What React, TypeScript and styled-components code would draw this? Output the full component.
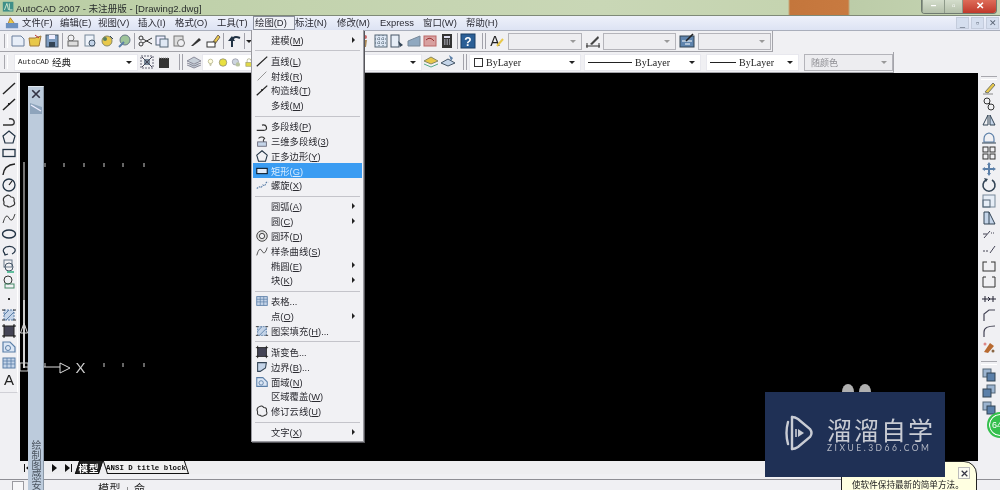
import React from "react";
import styled, { createGlobalStyle } from "styled-components";

const CJK = `"Liberation Sans", "Noto Sans CJK SC", sans-serif`;

const Global = createGlobalStyle`
  html, body { margin: 0; padding: 0; background: #f0f0f3; }
  body { font-family: ${CJK}; overflow: hidden; }
`;

const Page = styled.div`
  position: relative;
  width: 1000px;
  height: 490px;
  overflow: hidden;
  display: flex;
  flex-direction: column;
  background: #f0f0f3;
  filter: blur(0.35px);
`;

const TitleBar = styled.div`
  height: 15px;
  flex: none;
  display: flex;
  align-items: center;
  padding-left: 2px;
  gap: 1px;
  background: linear-gradient(90deg, #b9cda4 0%, #c3d3ae 30%, #c9d7b6 60%, #c5d4b0 78.8%, #c4763c 79%, #c87a40 84.8%, #bccca8 85%, #c6d5b4 100%);
  border-bottom: 1px solid #7f8a78;
`;

const TitleText = styled.span`
  font-size: 9.6px;
  color: #2a2f2e;
  white-space: nowrap;
`;

const CapsuleWrap = styled.div`
  margin-left: auto;
  margin-right: 3px;
  margin-top: -3px;
  width: 74px;
  height: 14px;
  display: flex;
  border: 1px solid #6f7a70;
  border-top: 0;
  border-radius: 0 0 4px 4px;
  overflow: hidden;
`;

const Capsule = styled.div<{ $w: number; $red?: boolean }>`
  width: ${(p) => p.$w}px;
  display: flex;
  align-items: center;
  justify-content: center;
  color: #fff;
  font-size: 10px;
  font-weight: bold;
  background: ${(p) => (p.$red ? "linear-gradient(#e0705c, #c0392b)" : "linear-gradient(#d6dfce, #b4c0aa)")};
  border-left: 1px solid #8e9a8a;
`;

const MenuBar = styled.div`
  height: 14px;
  flex: none;
  display: flex;
  align-items: center;
  background: linear-gradient(#eef1fa, #dde3f3);
  border-bottom: 1px solid #a9aebb;
  padding-left: 5px;
`;

const MenuLogo = styled.div`
  width: 17px;
  display: flex;
`;

const MenuEntry = styled.div<{ $w: number; $open?: boolean }>`
  width: ${(p) => p.$w}px;
  flex: none;
  height: 14px;
  line-height: 14px;
  font-size: 9.4px;
  color: #2a2a33;
  white-space: nowrap;
  box-sizing: border-box;
  ${(p) => (p.$open ? "border: 1px solid #8a8f9c; background: #eef0f6; line-height: 12px; padding-left: 1px;" : "")}
`;

const WinButtons = styled.div`
  margin-left: auto;
  display: flex;
  gap: 2px;
  padding-right: 1px;
`;

const WinButton = styled.div`
  width: 13px;
  height: 12px;
  background: #d5deee;
  border: 1px solid #c4ccdc;
  box-sizing: border-box;
  color: #5a6474;
  font-size: 9px;
  line-height: 10px;
  text-align: center;
`;

const ToolRow = styled.div`
  height: 21px;
  flex: none;
  display: flex;
  background: #f0f0f3;
`;

const Band = styled.div<{ $w: number; $pad: number }>`
  width: ${(p) => p.$w}px;
  box-sizing: border-box;
  padding-left: ${(p) => p.$pad}px;
  height: 21px;
  position: relative;
  display: flex;
  align-items: center;
  border-right: 1px solid #a4a4aa;
  border-bottom: 1px solid #a4a4aa;
`;

const Grip = styled.div`
  position: absolute;
  left: 4px;
  top: 3px;
  bottom: 3px;
  width: 2px;
  border-left: 1px solid #a8a8ae;
  border-right: 1px solid #fff;
`;

const Slot = styled.div<{ $w?: number }>`
  width: ${(p) => p.$w ?? 17}px;
  height: 16px;
  flex: none;
  display: flex;
  align-items: center;
  justify-content: center;
`;

const Sep = styled.div<{ $w: number; $double?: boolean }>`
  width: ${(p) => p.$w}px;
  height: 16px;
  flex: none;
  position: relative;
  &::after {
    content: "";
    position: absolute;
    left: 50%;
    top: 0;
    bottom: 0;
    width: ${(p) => (p.$double ? 2 : 0)}px;
    border-left: 1px solid #a2a2aa;
    border-right: ${(p) => (p.$double ? "1px solid #a2a2aa" : "0")};
  }
`;

const Drop = styled.div`
  width: 0;
  height: 0;
  flex: none;
  border-left: 3px solid transparent;
  border-right: 3px solid transparent;
  border-top: 3px solid #222;
`;

const Combo = styled.div<{ $w: number; $disabled?: boolean; $ml?: number }>`
  width: ${(p) => p.$w}px;
  margin-left: ${(p) => p.$ml ?? 0}px;
  height: 17px;
  flex: none;
  box-sizing: border-box;
  display: flex;
  align-items: center;
  gap: 3px;
  padding: 0 5px 0 3px;
  border: 1px solid ${(p) => (p.$disabled ? "#b4b4ba" : "#e8e8ee")};
  background: ${(p) => (p.$disabled ? "#ededf0" : "#fff")};
  color: ${(p) => (p.$disabled ? "#8d8d92" : "#222")};
  ${Drop} {
    margin-left: auto;
    ${(p) => (p.$disabled ? "border-top-color: #999;" : "")}
  }
`;

const MonoLabel = styled.span`
  font-family: "Liberation Mono", monospace;
  font-size: 7.4px;
  white-space: nowrap;
  color: #222;
`;

const CjkLabel = styled.span`
  font-size: 9.5px;
  white-space: nowrap;
  color: #222;
`;

const SerifLabel = styled.span`
  font-family: "Liberation Serif", serif;
  font-size: 10px;
  white-space: nowrap;
  color: #222;
`;

const Swatch = styled.span`
  width: 7px;
  height: 7px;
  flex: none;
  border: 1px solid #333;
  margin-left: 1px;
`;

const LineSample = styled.span<{ $w: number }>`
  width: ${(p) => p.$w}px;
  height: 1px;
  flex: none;
  background: #222;
`;

const ComboText = styled.span`
  font-size: 9px;
  margin-left: 3px;
`;

const Main = styled.div`
  flex: 1;
  min-height: 0;
  display: flex;
`;

const SideLeft = styled.div`
  width: 20px;
  flex: none;
  background: #f0f0f3;
`;

const LeftBand = styled.div`
  width: 18px;
  box-sizing: border-box;
  height: 320px;
  padding-top: 7px;
  display: flex;
  flex-direction: column;
  border-right: 1px solid #fff;
  border-bottom: 1px solid #d0d0d6;
`;

const Center = styled.div`
  flex: 1;
  min-width: 0;
  display: flex;
  flex-direction: column;
`;

const Canvas = styled.div`
  height: 388px;
  flex: none;
  background: #000;
  line-height: 0;
`;

const TabRow = styled.div`
  height: 13px;
  flex: none;
  display: flex;
  align-items: center;
  background: #eeeef0;
  padding-left: 1px;
`;

const Nav = styled.div<{ $w: number }>`
  width: ${(p) => p.$w}px;
  flex: none;
  display: flex;
  align-items: center;
  justify-content: center;
  gap: 1px;
`;

const TriRight = styled.i`
  display: block;
  width: 0;
  height: 0;
  border-top: 4px solid transparent;
  border-bottom: 4px solid transparent;
  border-left: 5px solid #111;
`;

const TriLeft = styled.i`
  display: block;
  width: 0;
  height: 0;
  border-top: 4px solid transparent;
  border-bottom: 4px solid transparent;
  border-right: 5px solid #111;
`;

const Bar = styled.i`
  display: block;
  width: 1px;
  height: 8px;
  background: #111;
`;

const Tab = styled.div<{ $active?: boolean; $w: number }>`
  position: relative;
  width: ${(p) => p.$w}px;
  height: 13px;
  flex: none;
  display: flex;
  align-items: center;
  justify-content: center;
  color: ${(p) => (p.$active ? "#fff" : "#111")};
  &::before {
    content: "";
    position: absolute;
    inset: 0 2px;
    transform: skewX(${(p) => (p.$active ? -18 : 18)}deg);
    background: ${(p) => (p.$active ? "#222" : "#f0f0f0")};
    border-left: 1px solid #111;
    border-right: 1px solid #111;
    border-bottom: 1px solid #111;
  }
  & > span {
    position: relative;
  }
`;

const ModelLabel = styled.span`
  font-size: 9.5px;
  font-weight: bold;
  letter-spacing: 1px;
`;

const SheetLabel = styled.span`
  font-family: "Liberation Mono", monospace;
  font-size: 7.4px;
  font-weight: bold;
`;

const SideRight = styled.div`
  width: 22px;
  flex: none;
  display: flex;
  flex-direction: column;
  align-items: center;
  padding-top: 3px;
  background: #f0f0f3;
`;

const RightGrip = styled.div<{ $mt: number }>`
  width: 16px;
  height: 2px;
  flex: none;
  margin-top: ${(p) => p.$mt}px;
  border-top: 1px solid #a8a8ae;
  border-bottom: 1px solid #fff;
`;

const VSlot = styled.div<{ $h?: number }>`
  height: ${(p) => p.$h ?? 16.2}px;
  width: 17px;
  flex: none;
  display: flex;
  align-items: center;
  justify-content: center;
`;

const Command = styled.div`
  height: 16px;
  flex: none;
  position: relative;
  overflow: hidden;
  background: #f0f0f3;
  padding-left: 98px;
  &::before {
    content: "";
    position: absolute;
    left: 0;
    right: 0;
    top: 5px;
    border-top: 1px solid #8e8e94;
  }
`;

const CommandGrip = styled.div`
  position: absolute;
  left: 12px;
  top: 7px;
  width: 12px;
  height: 12px;
  box-sizing: border-box;
  border: 1px solid #9a9aa0;
  border-bottom: 0;
  background: #f7f7f9;
`;

const CommandText = styled.div`
  margin-top: 8px;
  font-size: 11px;
  line-height: 14px;
  color: #222;
  letter-spacing: 0.5px;
  white-space: nowrap;
`;

const Palette = styled.div`
  position: absolute;
  left: 28px;
  top: 86px;
  width: 16px;
  height: 404px;
  box-sizing: border-box;
  background: #bccbdc;
  border-right: 1px solid #8d9aa8;
  display: flex;
  flex-direction: column;
  align-items: center;
  padding-top: 1px;
  border-top: 1px solid #dfe6ee;
`;

const PaletteLabel = styled.div`
  margin-top: auto;
  writing-mode: vertical-rl;
  font-size: 10px;
  line-height: 13px;
  color: #4c5560;
`;

const Menu = styled.div`
  position: absolute;
  left: 251px;
  top: 30px;
  width: 113px;
  height: 412px;
  box-sizing: border-box;
  padding: 2.5px 1px;
  background: #f1f1f4;
  border: 1px solid #9a9aa0;
  border-top: 0;
  box-shadow: 1px 1px 0 #55555a;
  z-index: 3;
`;

const Row = styled.div<{ $active?: boolean }>`
  height: 14.8px;
  display: flex;
  align-items: center;
  position: relative;
  font-size: 9.3px;
  color: ${(p) => (p.$active ? "#d6ebff" : "#2a2a30")};
  background: ${(p) => (p.$active ? "#3a9cf2" : "transparent")};
  white-space: nowrap;
`;

const RowIcon = styled.div`
  width: 18px;
  flex: none;
  display: flex;
  justify-content: center;
`;

const Underline = styled.span`
  text-decoration: underline;
`;

const Chevron = styled.i`
  position: absolute;
  right: 7px;
  top: 4px;
  width: 0;
  height: 0;
  border-top: 3px solid transparent;
  border-bottom: 3px solid transparent;
  border-left: 3px solid #222;
`;

const Divider = styled.div`
  height: 1px;
  margin: 3px 2px 2.2px 2px;
  background: #c4c4ca;
`;

const Watermark = styled.div`
  position: absolute;
  left: 765px;
  top: 392px;
  width: 180px;
  height: 85px;
  box-sizing: border-box;
  padding: 23px 0 0 19px;
  background: #1f3055;
  display: flex;
  gap: 13px;
  z-index: 5;
`;

const WmText = styled.div`
  display: flex;
  flex-direction: column;
  color: #c9ccd4;
`;

const WmTitle = styled.div`
  font-family: "Noto Sans CJK SC", sans-serif;
  font-size: 25px;
  line-height: 28px;
  letter-spacing: 2px;
  white-space: nowrap;
`;

const WmSub = styled.div`
  font-family: Lato, sans-serif;
  font-size: 8.5px;
  line-height: 10px;
  letter-spacing: 2.5px;
  white-space: nowrap;
  color: #b4b8c4;
`;

const Balloon = styled.div`
  position: absolute;
  left: 841px;
  top: 461px;
  width: 136px;
  height: 40px;
  box-sizing: border-box;
  background: #ffffe1;
  border: 1px solid #222;
  border-top-right-radius: 13px;
  padding: 17px 0 0 10px;
  font-size: 8.6px;
  line-height: 12px;
  color: #222;
  white-space: nowrap;
  z-index: 4;
`;

const BalloonClose = styled.div`
  position: absolute;
  right: 6px;
  top: 5px;
  width: 12px;
  height: 12px;
  box-sizing: border-box;
  border: 1px solid #bbb;
  background: #fbfbf2;
  display: flex;
  align-items: center;
  justify-content: center;
`;

const Badge = styled.div`
  position: absolute;
  left: 987px;
  top: 412px;
  width: 26px;
  height: 26px;
  box-sizing: border-box;
  border-radius: 50%;
  border: 2px solid #35c04d;
  background: #35c04d;
  box-shadow: inset 0 0 0 1px #fff;
  color: #fff;
  font-size: 9px;
  line-height: 22px;
  padding-left: 3px;
  z-index: 2;
`;

const L = (p: React.SVGProps<SVGPathElement>) => <path fill="none" stroke="#222" strokeWidth={1.2} {...p} />;
const B = "#5b7fa8";
const BF = "#c4d4e8";
const Y = "#e8c84a";

const icons: Record<string, React.ReactNode> = {
  line: <L d="M2 14L14 3" strokeWidth={1.4} />,
  ray: <L d="M3 13L13 3" stroke="#888" strokeWidth={1} />,
  xline: <><L d="M2 14L14 3" strokeWidth={1.5} /><rect x="7" y="7" width="2" height="2" fill="#222" /></>,
  pline: <L d="M2 13H10Q14 13 13 9Q12 6 8 7" strokeWidth={1.4} stroke="#333" />,
  pline3d: <><L d="M4 5Q8 2 11 5Q8 8 11 10" stroke="#333" /><rect x="3" y="9" width="10" height="5" fill={BF} stroke="#667" /></>,
  polygon: <L d="M8 2L14 7L12 14H4L2 7Z" strokeWidth={1.2} stroke="#234" />,
  rect: <rect x="2" y="4.5" width="12" height="7" fill="none" stroke="#234" strokeWidth={1.3} />,
  rectActive: <rect x="2" y="5" width="12" height="6" fill="#dfeaf8" stroke="#123" strokeWidth={1.3} />,
  arc: <L d="M2 14Q3 4 14 3" strokeWidth={1.4} />,
  circle: <><circle cx="8" cy="8" r="6" fill="none" stroke="#234" strokeWidth={1.3} /><L d="M8 8L11 4" /></>,
  cloud: <L d="M5 3Q8 1 10 4Q14 4 13 8Q15 12 11 13Q8 15 6 13Q2 13 3 9Q1 5 5 3Z" stroke="#333" />,
  spline: <L d="M2 13Q5 2 8 8T14 4" stroke="#444" strokeWidth={1} />,
  ellipse: <ellipse cx="8" cy="8" rx="6.5" ry="4" fill="none" stroke="#234" strokeWidth={1.4} />,
  ellarc: <L d="M4 12Q0 8 5 5Q11 3 14 7Q15 10 11 12M3 10L4 13L7 12" stroke="#234" />,
  block: <><rect x="3" y="2" width="8" height="7" fill="none" stroke="#678" /><circle cx="8" cy="9" r="4" fill="none" stroke="#456" /><path d="M6 14L13 14" stroke="#2a7" strokeWidth={1.4} /></>,
  insert: <><circle cx="7" cy="6" r="4" fill="none" stroke="#333" /><rect x="4" y="10" width="9" height="4" fill="none" stroke="#486" /></>,
  dot: <rect x="7" y="7" width="2" height="2" fill="#333" />,
  hatch: <><rect x="3" y="3" width="10" height="10" fill={BF} stroke={B} strokeDasharray="2 1" /><path d="M3 8L8 3M5 13L13 5" stroke={B} /><path d="M1 3h3M12 3h3M1 13h3M12 13h3" stroke="#333" /></>,
  gradient: <><rect x="3" y="3" width="10" height="10" fill="#445" stroke="#222" /><path d="M1 3h3M12 3h3M1 13h3M12 13h3M3 1v3M13 1v3M3 12v3M13 12v3" stroke="#222" /></>,
  boundary: <><path d="M3 3H13L12 9L6 13H3Z" fill={BF} stroke="#345" strokeWidth={1.2} /></>,
  region: <><path d="M2 3H9L14 8V13H2Z" fill="#dbe6f4" stroke={B} strokeWidth={1.2} /><circle cx="7" cy="9" r="2.5" fill="none" stroke={B} /></>,
  table: <><rect x="2" y="3" width="12" height="10" fill={BF} stroke={B} /><path d="M2 6H14M2 9H14M6 3V13M10 3V13" stroke={B} strokeWidth={0.8} /></>,
  letterA: <text x="8" y="14" textAnchor="middle" fontSize="15" fontFamily="Liberation Sans" fill="#222">A</text>,
  donut: <><circle cx="8" cy="8" r="6" fill="#ddd" stroke="#333" /><circle cx="8" cy="8" r="3" fill="#f1f1f4" stroke="#333" /></>,
  helix: <L d="M2 12L5 10L7 11L9 8L11 9L13 5L15 5" stroke={B} strokeDasharray="2 1" />,
  erase: <><path d="M4 12L12 3L14 5L7 13Z" fill={Y} stroke="#776" /><path d="M2 14H12" stroke="#888" /></>,
  copy: <><circle cx="6" cy="5" r="3" fill="none" stroke="#333" /><circle cx="10" cy="11" r="3" fill="none" stroke="#333" /><path d="M8 7l1 1" stroke="#333" /></>,
  mirror: <><path d="M7 3L2 13H7Z" fill="none" stroke="#345" /><path d="M9 3L14 13H9Z" fill={BF} stroke="#345" /></>,
  offset: <><path d="M3 13V10Q3 5 8 4Q13 5 13 10V13Z" fill="none" stroke={B} strokeWidth={1.2} /><path d="M1 14H15" stroke="#345" /></>,
  array: <><rect x="2" y="2" width="5" height="5" fill="none" stroke="#333" /><rect x="9" y="2" width="5" height="5" fill="none" stroke="#333" /><rect x="2" y="9" width="5" height="5" fill="none" stroke="#333" /><rect x="9" y="9" width="5" height="5" fill="none" stroke="#333" /></>,
  move: <path d="M8 1L10 4H9V7H12V6L15 8L12 10V9H9V12H10L8 15L6 12H7V9H4V10L1 8L4 6V7H7V4H6Z" fill={B} />,
  rotate: <><path d="M5 3A6 6 0 1 0 11 3" fill="none" stroke="#345" strokeWidth={1.6} /><path d="M3 1L7 2L5 5Z" fill="#345" /></>,
  scale: <><rect x="2" y="2" width="12" height="12" fill="#e6edf6" stroke="#789" /><rect x="2" y="7" width="7" height="7" fill="none" stroke="#567" /></>,
  stretch: <><path d="M3 2H8L14 14H3Z" fill={BF} stroke="#345" /><path d="M8 2V14" stroke="#345" /></>,
  trim: <path d="M3 12L9 5M10 7h1M12 7h1M2 8h4" stroke="#445" fill="none" />,
  extend: <path d="M2 9h2M5 9h2M9 11L14 4" stroke="#445" fill="none" />,
  brk: <><rect x="2" y="4" width="12" height="9" fill="none" stroke="#333" /><path d="M6 4h4" stroke="#f0f0f3" strokeWidth={2} /></>,
  brkp: <path d="M5 3H2V13H14V3H11" fill="none" stroke="#333" />,
  join: <path d="M1 8H15M4 5V11M7 6L9 8L7 10M12 5V11" stroke="#223" fill="none" />,
  chamfer: <L d="M3 14V7L8 3H14" stroke="#445" />,
  fillet: <L d="M3 14V9Q3 3 14 3" stroke="#445" />,
  explode: <><path d="M3 13L9 4L13 7L7 14Z" fill="#b86a30" /><circle cx="4" cy="5" r="1.5" fill="#d88" /><circle cx="12" cy="12" r="1.5" fill="#864" /></>,
  order1: <><rect x="2" y="2" width="8" height="8" fill="#9cb4d0" stroke="#567" /><rect x="6" y="6" width="8" height="8" fill={B} stroke="#345" /></>,
  order2: <><rect x="6" y="2" width="8" height="8" fill="#9cb4d0" stroke="#567" /><rect x="2" y="6" width="8" height="8" fill={B} stroke="#345" /></>,
  newdoc: <><path d="M2 3H11L14 6V13H2Z" fill="#e8eef8" stroke="#6a7f9c" /></>,
  open: <><path d="M2 5H8L14 3L12 13H3Z" fill={Y} stroke="#a0793a" /><path d="M8 2L12 5" stroke="#b33" /></>,
  save: <><rect x="2" y="2" width="12" height="12" fill="#7e9cc0" stroke="#456" /><rect x="5" y="2" width="6" height="4" fill="#eef" /><rect x="5" y="9" width="6" height="5" fill="#345" /></>,
  print: <><circle cx="6" cy="5" r="3" fill="none" stroke="#777" /><rect x="3" y="8" width="10" height="5" fill="#ddd" stroke="#666" /></>,
  preview: <><rect x="3" y="2" width="9" height="11" fill="#eef3fa" stroke="#789" /><circle cx="10" cy="10" r="3" fill={BF} stroke="#456" /></>,
  publish: <><circle cx="8" cy="8" r="5" fill={Y} stroke="#886" /><circle cx="6" cy="6" r="2" fill="#5a7f60" /><path d="M11 3l3 3" stroke="#345" /></>,
  plot: <><circle cx="9" cy="7" r="5" fill="#9ec49a" stroke="#678" /><path d="M3 14L8 9" stroke={B} strokeWidth={2} /></>,
  cut: <><circle cx="4" cy="5" r="2" fill="none" stroke="#333" /><circle cx="4" cy="11" r="2" fill="none" stroke="#333" /><path d="M6 6L15 11M6 10L15 5" stroke="#333" /></>,
  copyc: <><rect x="2" y="3" width="9" height="9" fill="#eef" stroke="#567" /><rect x="6" y="6" width="8" height="8" fill="#dfe8f4" stroke="#567" /></>,
  paste: <><rect x="3" y="3" width="9" height="10" fill="#ddd" stroke="#777" /><circle cx="10" cy="10" r="3.5" fill="#f0f0f3" stroke="#777" /></>,
  brush: <path d="M3 13L11 5L13 7L5 13Z" fill="#333" />,
  match: <><path d="M8 9L13 2L15 4L10 11Z" fill={Y} stroke="#765" /><rect x="2" y="9" width="8" height="5" fill="#fff" stroke="#333" /></>,
  undo: <><path d="M14 5Q7 2 6 8V14" fill="none" stroke="#234" strokeWidth={2} /><path d="M2 8L6 3L9 8Z" fill="#234" /></>,
  man: <><circle cx="9" cy="4" r="2" fill="#c66" /><path d="M7 7H11L10 14H8Z" fill="#a85" /></>,
  gridb: <><rect x="2" y="2" width="12" height="12" fill="#dde7f4" stroke="#567" /><path d="M6 2V14M10 2V14M2 6H14M2 10H14" stroke="#567" strokeDasharray="1 1" /></>,
  doc: <><rect x="2" y="2" width="8" height="12" fill="#e6edf6" stroke="#456" /><path d="M9 8L14 12L11 14Z" fill="#345" /></>,
  sheet: <><path d="M2 8L14 3V13H2Z" fill="#8fa8c0" stroke="#789" /></>,
  red: <><rect x="2" y="3" width="12" height="10" fill="#d8a0a0" stroke="#b66" /><path d="M4 7Q8 3 12 8" stroke="#933" fill="none" /></>,
  calc: <><rect x="3" y="1" width="10" height="14" fill="#333" /><rect x="5" y="3" width="6" height="2" fill="#dde" /><path d="M5 7h6M5 9h6M5 11h6" stroke="#dde" strokeDasharray="1.5 1" /></>,
  help: <><rect x="1" y="1" width="14" height="14" fill="#2b5f96" stroke="#1b3f66" /><text x="8" y="13" textAnchor="middle" fontSize="12" fontWeight="bold" fontFamily="Liberation Sans" fill="#fff">?</text></>,
  tstyle: <><text x="6" y="13" textAnchor="middle" fontSize="14" fontFamily="Liberation Sans" fill="#222">A</text><path d="M8 13L14 6" stroke={Y} strokeWidth={2} /></>,
  dim: <><path d="M1 13H15M2 10V15M14 10V15" stroke="#333" /><path d="M5 11L13 3L14 5L7 12Z" fill="#444" /></>,
  dimed: <><rect x="1" y="3" width="14" height="11" fill="#5f84ad" stroke="#345" /><path d="M3 8H13M6 11H11" stroke="#fff" /><path d="M7 8L14 1" stroke="#222" strokeWidth={1.6} /></>,
  ws: <><rect x="2" y="2" width="12" height="12" fill="none" stroke="#667" strokeDasharray="2 1" /><rect x="5" y="5" width="6" height="6" fill="#789" /><path d="M3 3L13 13M13 3L3 13" stroke="#445" /></>,
  lock: <><rect x="3" y="4" width="10" height="10" fill="#333" /><path d="M3 4H13" stroke="#999" strokeDasharray="1 1" /></>,
  layers: <path d="M8 3L15 7L8 10L1 7ZM1 9L8 12L15 9M1 11L8 14L15 11" fill="#c7cfd8" stroke="#778" strokeWidth={0.8} />,
  bulb: <><circle cx="8" cy="6" r="4" fill="#fffde0" stroke="#996" /><path d="M7 10V13H9V10" stroke="#996" fill="none" /></>,
  sun: <circle cx="8" cy="8" r="6" fill="#e8e040" stroke="#777" />,
  sunf: <><circle cx="7" cy="7" r="5" fill="#cdd5df" stroke="#889" /><circle cx="11" cy="11" r="3.5" fill="#b8c4a0" /></>,
  lk: <><path d="M5 8V5A3 3 0 0 1 11 5" fill="none" stroke="#996" /><rect x="3" y="8" width="9" height="6" fill="#e0d848" stroke="#996" /></>,
  lay2: <><path d="M8 3L15 7L8 10L1 7Z" fill={Y} stroke="#886" /><path d="M1 10L8 13L15 10" fill="none" stroke="#5a8" /></>,
  lay3: <><path d="M8 5L15 9L8 12L1 9Z" fill={BF} stroke="#456" /><path d="M9 1L13 4L11 7Z" fill={B} /></>,
  close: <path d="M3 3L13 13M13 3L3 13" stroke="#334" strokeWidth={2.2} />,
  pal: <><path d="M2 3L14 7V14H2Z" fill="#8ea4bc" /><path d="M3 5L13 11" stroke="#eef" strokeWidth={1.4} /></>,
  logo: <><path d="M2 13L6 2L14 13Z" fill={Y} stroke="#b07a20" /><rect x="1" y="8" width="14" height="6" fill="#6d91c0" /></>,
  acad: <><rect x="1" y="1" width="13" height="12" fill="#3f8f88" /><path d="M3 11L6 3L8 11M9 3V11H13" stroke="#e8f4d8" fill="none" /></>,
};

const Ico = ({ name, size = 16 }: { name: string; size?: number }) => (
  <svg width={size} height={size} viewBox="0 0 16 16">{icons[name]}</svg>
);

const menus: [string, number, boolean?][] = [
  ["文件(F)", 38], ["编辑(E)", 38], ["视图(V)", 40], ["插入(I)", 37], ["格式(O)", 42], ["工具(T)", 36],
  ["绘图(D)", 42, true], ["标注(N)", 42], ["修改(M)", 43], ["Express", 43], ["窗口(W)", 43], ["帮助(H)", 40],
];

type Item = { t: string; k?: string; tail?: string; icon?: string; arrow?: boolean; active?: boolean } | "-";

const items: Item[] = [
  { t: "建模", k: "M", arrow: true }, "-",
  { t: "直线", k: "L", icon: "line" },
  { t: "射线", k: "R", icon: "ray" },
  { t: "构造线", k: "T", icon: "xline" },
  { t: "多线", k: "M" }, "-",
  { t: "多段线", k: "P", icon: "pline" },
  { t: "三维多段线", k: "3", icon: "pline3d" },
  { t: "正多边形", k: "Y", icon: "polygon" },
  { t: "矩形", k: "G", icon: "rectActive", active: true },
  { t: "螺旋", k: "X", icon: "helix" }, "-",
  { t: "圆弧", k: "A", arrow: true },
  { t: "圆", k: "C", arrow: true },
  { t: "圆环", k: "D", icon: "donut" },
  { t: "样条曲线", k: "S", icon: "spline" },
  { t: "椭圆", k: "E", arrow: true },
  { t: "块", k: "K", arrow: true }, "-",
  { t: "表格...", icon: "table" },
  { t: "点", k: "O", arrow: true },
  { t: "图案填充", k: "H", tail: "...", icon: "hatch" }, "-",
  { t: "渐变色...", icon: "gradient" },
  { t: "边界", k: "B", tail: "...", icon: "boundary" },
  { t: "面域", k: "N", icon: "region" },
  { t: "区域覆盖", k: "W" },
  { t: "修订云线", k: "U", icon: "cloud" }, "-",
  { t: "文字", k: "X", arrow: true },
];

const leftTools = ["line", "xline", "pline", "polygon", "rect", "arc", "circle", "cloud", "spline", "ellipse", "ellarc", "block", "insert", "dot", "hatch", "gradient", "region", "table", "letterA"];
const rightTools = ["erase", "copy", "mirror", "offset", "array", "move", "rotate", "scale", "stretch", "trim", "extend", "brk", "brkp", "join", "chamfer", "fillet", "explode"];

const Icons = ({ names, w }: { names: string[]; w?: number }) => (
  <>
    {names.map((n, i) => (
      <Slot key={i} $w={w}><Ico name={n} /></Slot>
    ))}
  </>
);

const ticks = (y: number, xs: number[]) =>
  xs.map((x) => <line key={`${x}-${y}`} x1={x} x2={x} y1={y - 2} y2={y + 2} stroke="#ccc" strokeWidth={1} />);

export default function App() {
  return (
    <Page>
      <Global />
      <TitleBar>
        <Ico name="acad" size={13} />
        <TitleText>AutoCAD 2007 - 未注册版 - [Drawing2.dwg]</TitleText>
        <CapsuleWrap>
          <Capsule $w={22}>–</Capsule>
          <Capsule $w={18}>▫</Capsule>
          <Capsule $w={34} $red>✕</Capsule>
        </CapsuleWrap>
      </TitleBar>
      <MenuBar>
        <MenuLogo><Ico name="logo" size={14} /></MenuLogo>
        {menus.map(([m, w, open]) => (
          <MenuEntry key={m} $w={w} $open={open}>{m}</MenuEntry>
        ))}
        <WinButtons>
          <WinButton>_</WinButton>
          <WinButton>▫</WinButton>
          <WinButton>✕</WinButton>
        </WinButtons>
      </MenuBar>

      <ToolRow>
        <Band $w={773} $pad={9}>
          <Grip />
          <Icons names={["newdoc", "open", "save"]} />
          <Sep $w={4} />
          <Icons names={["print", "preview", "publish", "plot"]} />
          <Sep $w={4} />
          <Icons names={["cut", "copyc", "paste", "brush", "match"]} />
          <Sep $w={4} />
          <Icons names={["undo"]} />
          <Sep $w={4} />
          <Drop />
          <Sep $w={104} />
          <Icons w={16.5} names={["man", "gridb", "doc", "sheet", "red", "calc"]} />
          <Sep $w={4} />
          <Icons names={["help"]} />
          <Sep $w={12} $double />
          <Icons names={["tstyle"]} />
          <Combo $w={74} $ml={3} $disabled><Drop /></Combo>
          <Icons w={21} names={["dim"]} />
          <Combo $w={73} $disabled><Drop /></Combo>
          <Icons w={22} names={["dimed"]} />
          <Combo $w={73} $disabled><Drop /></Combo>
        </Band>
      </ToolRow>
      <ToolRow>
        <Band $w={894} $pad={14}>
          <Grip />
          <Combo $w={124}>
            <MonoLabel>AutoCAD</MonoLabel>
            <CjkLabel>经典</CjkLabel>
            <Drop />
          </Combo>
          <Icons names={["ws", "lock"]} />
          <Sep $w={13} $double />
          <Icons names={["layers"]} />
          <Combo $w={220}>
            <Slot $w={9}><Ico name="bulb" size={13} /></Slot>
            <Slot $w={10}><Ico name="sun" size={13} /></Slot>
            <Slot $w={10}><Ico name="sunf" size={13} /></Slot>
            <Slot $w={10}><Ico name="lk" size={13} /></Slot>
            <Drop />
          </Combo>
          <Icons names={["lay2", "lay3"]} />
          <Sep $w={13} $double />
          <Combo $w={112}>
            <Swatch />
            <SerifLabel>ByLayer</SerifLabel>
            <Drop />
          </Combo>
          <Combo $w={117} $ml={3}>
            <LineSample $w={44} />
            <SerifLabel>ByLayer</SerifLabel>
            <Drop />
          </Combo>
          <Combo $w={93} $ml={5}>
            <LineSample $w={26} />
            <SerifLabel>ByLayer</SerifLabel>
            <Drop />
          </Combo>
          <Combo $w={89} $ml={5} $disabled>
            <ComboText>随颜色</ComboText>
            <Drop />
          </Combo>
        </Band>
      </ToolRow>

      <Main>
        <SideLeft>
          <LeftBand>
            {leftTools.map((n, i) => (
              <VSlot key={i}><Ico name={n} /></VSlot>
            ))}
          </LeftBand>
        </SideLeft>
        <Center>
          <Canvas>
            <svg width="958" height="388" viewBox="20 73 958 388">
              <line x1="24" x2="24" y1="162" y2="300" stroke="#e8e8e8" strokeWidth={1} />
              <line x1="24" x2="24" y1="300" y2="368" stroke="#fff" strokeWidth={1.6} />
              {ticks(165, [45, 64, 84, 104, 123, 144])}
              {ticks(365, [45, 104, 123, 144])}
              <path d="M24 330V367H60" fill="none" stroke="#ddd" />
              <path d="M24 323L20.5 333H27.5Z" fill="none" stroke="#ddd" />
              <path d="M60 363V373L70 368Z" fill="none" stroke="#ddd" />
              <rect x="20" y="363" width="8" height="8" fill="none" stroke="#ccc" />
              <text x="80.5" y="373" textAnchor="middle" fontSize="15" fontFamily="Liberation Sans" fill="#ccc">X</text>
              <ellipse cx="848" cy="392" rx="6" ry="8" fill="#b0b0b0" />
              <ellipse cx="865" cy="392" rx="6" ry="8" fill="#b0b0b0" />
            </svg>
          </Canvas>
          <TabRow>
            <Nav $w={13}><Bar /><TriLeft /></Nav>
            <Nav $w={13} />
            <Nav $w={14}><TriRight /></Nav>
            <Nav $w={14}><TriRight /><Bar /></Nav>
            <Tab $active $w={28}><ModelLabel>模型</ModelLabel></Tab>
            <Tab $w={86}><SheetLabel>ANSI D title block</SheetLabel></Tab>
          </TabRow>
        </Center>
        <SideRight>
          <RightGrip $mt={0} />
          {rightTools.map((n, i) => (
            <VSlot key={i}><Ico name={n} /></VSlot>
          ))}
          <RightGrip $mt={6} />
          <VSlot $h={2} />
          <VSlot><Ico name="order1" /></VSlot>
          <VSlot><Ico name="order2" /></VSlot>
          <VSlot><Ico name="order1" /></VSlot>
        </SideRight>
      </Main>
      <Command>
        <CommandGrip />
        <CommandText>模型 ↓ 命</CommandText>
      </Command>

      <Palette>
        <Ico name="close" size={12} />
        <Ico name="pal" />
        <PaletteLabel>绘制图感安</PaletteLabel>
      </Palette>

      <Menu>
        {items.map((it, i) =>
          it === "-" ? (
            <Divider key={i} />
          ) : (
            <Row key={i} $active={it.active}>
              <RowIcon>{it.icon ? <Ico name={it.icon} size={14} /> : null}</RowIcon>
              <span>
                {it.t}
                {it.k ? <>(<Underline>{it.k}</Underline>)</> : null}
                {it.tail}
              </span>
              {it.arrow ? <Chevron /> : null}
            </Row>
          )
        )}
      </Menu>

      <Watermark>
        <svg width="30" height="36" viewBox="0 0 30 36" fill="none" stroke="#c9ccd4" strokeWidth="2.4">
          <path d="M8 2V34" strokeLinecap="round" />
          <path d="M4 7Q1 18 4 29" strokeLinecap="round" />
          <path d="M8 2Q11 2 14 4L26 14Q29 18 26 22L14 32Q11 34 8 34" strokeLinecap="round" />
          <path d="M14 14L20 18L14 22Z" fill="#c9ccd4" stroke="none" />
          <path d="M12 14V22" strokeWidth="1.6" />
        </svg>
        <WmText>
          <WmTitle>溜溜自学</WmTitle>
          <WmSub>ZIXUE.3D66.COM</WmSub>
        </WmText>
      </Watermark>

      <Balloon>
        使软件保持最新的简单方法。
        <BalloonClose><Ico name="close" size={9} /></BalloonClose>
      </Balloon>
      <Badge>64</Badge>
    </Page>
  );
}
